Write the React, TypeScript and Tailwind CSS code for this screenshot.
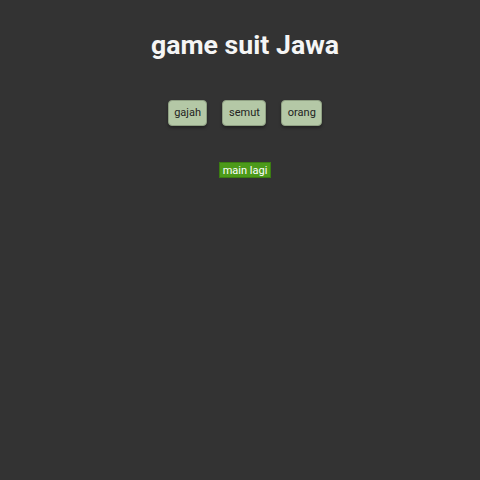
import React from 'react';

const choices = ['gajah', 'semut', 'orang'];

const App: React.FC = () => {
  return (
    <div className="min-h-screen w-full bg-[#333333] pl-[10px] flex flex-col items-center font-['Roboto',sans-serif]">
      {/* judul */}
      <h1 className="mt-[29px] text-[26.7px] leading-[32px] font-bold text-[#f5f5f5]">game suit Jawa</h1>

      {/* pilihan */}
      <div className="mt-[39px] flex gap-[15px]">
        {choices.map((c) => (
          <button
            key={c}
            className="h-[26px] px-[5.5px] rounded-[4px] bg-[#b4c8a6] border border-[#8fa083] text-[11px] text-[#222222] shadow-[0_2px_3px_rgba(0,0,0,0.35)]"
          >
            {c}
          </button>
        ))}
      </div>

      <button className="mt-[36px] h-[16px] px-[3px] bg-[#4c9a1a] border border-[#3b7d12] text-[11px] leading-none text-white">
        main lagi
      </button>
    </div>
  );
};

export default App;
